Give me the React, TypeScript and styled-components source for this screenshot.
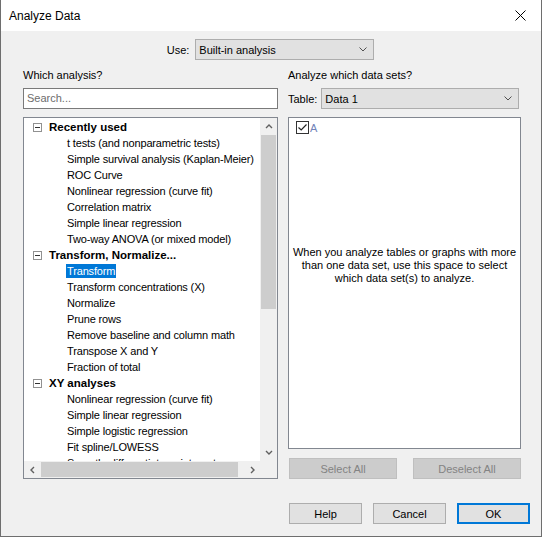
import styled, { createGlobalStyle } from 'styled-components';

const GlobalStyle = createGlobalStyle`
  html, body {
    margin: 0;
    padding: 0;
    background: #f0f0f0;
  }
  * {
    box-sizing: border-box;
  }
`;

interface TreeGroup {
  title: string;
  items: string[];
}

const groups: TreeGroup[] = [
  {
    title: 'Recently used',
    items: [
      't tests (and nonparametric tests)',
      'Simple survival analysis (Kaplan-Meier)',
      'ROC Curve',
      'Nonlinear regression (curve fit)',
      'Correlation matrix',
      'Simple linear regression',
      'Two-way ANOVA (or mixed model)',
    ],
  },
  {
    title: 'Transform, Normalize...',
    items: [
      'Transform',
      'Transform concentrations (X)',
      'Normalize',
      'Prune rows',
      'Remove baseline and column math',
      'Transpose X and Y',
      'Fraction of total',
    ],
  },
  {
    title: 'XY analyses',
    items: [
      'Nonlinear regression (curve fit)',
      'Simple linear regression',
      'Simple logistic regression',
      'Fit spline/LOWESS',
      'Smooth, differentiate or integrate curve',
    ],
  },
];

const selected = 'Transform';

function Chevron({ dir }: { dir: 'up' | 'down' | 'left' | 'right' }) {
  const paths = {
    down: 'M1 2 L4 5 L7 2',
    up: 'M1 5 L4 2 L7 5',
    left: 'M5 1 L2 4 L5 7',
    right: 'M3 1 L6 4 L3 7',
  };
  return (
    <svg width="8" height="8" viewBox="0 0 8 8">
      <path d={paths[dir]} fill="none" stroke="#606060" strokeWidth="1.4" />
    </svg>
  );
}

function DropArrow() {
  return (
    <svg width="8" height="5" viewBox="0 0 8 5">
      <path d="M0.5 0.5 L4 4 L7.5 0.5" fill="none" stroke="#505050" strokeWidth="1" />
    </svg>
  );
}

export default function App() {
  return (
    <>
      <GlobalStyle />
      <Window>
        <TitleBar>
          <span>Analyze Data</span>
          <CloseButton>
            <svg width="11" height="11" viewBox="0 0 11 11">
              <path d="M0.5 0.5 L10.5 10.5 M10.5 0.5 L0.5 10.5" stroke="#000" strokeWidth="1" />
            </svg>
          </CloseButton>
        </TitleBar>

        <Body>
          <UseRow>
            <span>Use:</span>
            <Select $width={179}>
              <span>Built-in analysis</span>
              <DropArrow />
            </Select>
          </UseRow>

          <Columns>
            <Column>
              <Label>Which analysis?</Label>
              <SearchBox>Search...</SearchBox>
              <TreeBox>
                <TreeView>
                  {groups.map((g) => (
                    <div key={g.title}>
                      <GroupRow>
                        <Toggle />
                        <span>{g.title}</span>
                      </GroupRow>
                      {g.items.map((item) => (
                        <ItemRow key={item}>
                          <ItemText $active={item === selected && g.title !== 'Recently used'}>
                            {item}
                          </ItemText>
                        </ItemRow>
                      ))}
                    </div>
                  ))}
                </TreeView>
                <VScroll>
                  <ArrowCell>
                    <Chevron dir="up" />
                  </ArrowCell>
                  <VThumb />
                  <Track />
                  <ArrowCell>
                    <Chevron dir="down" />
                  </ArrowCell>
                </VScroll>
                <HScroll>
                  <ArrowCell>
                    <Chevron dir="left" />
                  </ArrowCell>
                  <HThumb />
                  <Track />
                  <ArrowCell>
                    <Chevron dir="right" />
                  </ArrowCell>
                </HScroll>
                <Corner />
              </TreeBox>
            </Column>

            <Column>
              <Label>Analyze which data sets?</Label>
              <TableRow>
                <span>Table:</span>
                <Select $width={198}>
                  <span>Data 1</span>
                  <DropArrow />
                </Select>
              </TableRow>
              <DataSetBox>
                <DataSetRow>
                  <CheckBox>
                    <svg width="11" height="11" viewBox="0 0 11 11">
                      <path d="M1.5 5.5 L4.2 8 L9.5 2.5" fill="none" stroke="#222" strokeWidth="1.2" />
                    </svg>
                  </CheckBox>
                  <DataSetName>A</DataSetName>
                </DataSetRow>
                <Hint>
                  When you analyze tables or graphs with more
                  <br />
                  than one data set, use this space to select
                  <br />
                  which data set(s) to analyze.
                </Hint>
              </DataSetBox>
              <SelectRow>
                <Button $disabled>Select All</Button>
                <Button $disabled>Deselect All</Button>
              </SelectRow>
            </Column>
          </Columns>

          <Footer>
            <Button $w={73}>Help</Button>
            <Button $w={73}>Cancel</Button>
            <Button $w={73} $primary>
              OK
            </Button>
          </Footer>
        </Body>
      </Window>
    </>
  );
}

const font = `'Liberation Sans', Arial, sans-serif`;

const Window = styled.div`
  width: 542px;
  height: 537px;
  background: #f0f0f0;
  border: 1px solid #6e6e6e;
  border-top: none;
  display: flex;
  flex-direction: column;
  font-family: ${font};
  font-size: 11px;
  color: #000;
`;

const TitleBar = styled.div`
  height: 31px;
  background: #fff;
  display: flex;
  align-items: center;
  justify-content: space-between;
  padding-left: 8px;
  font-size: 12px;
`;

const CloseButton = styled.div`
  width: 46px;
  height: 31px;
  display: flex;
  align-items: center;
  justify-content: center;
  margin-right: -2px;
`;

const Body = styled.div`
  flex: 1;
  display: flex;
  flex-direction: column;
  padding: 8px 11px 0 22px;
`;

const UseRow = styled.div`
  display: flex;
  align-items: center;
  justify-content: center;
  gap: 6px;
  margin-right: 12px;
`;

const Select = styled.div<{ $width: number }>`
  width: ${(p) => p.$width}px;
  height: 21px;
  background: #e1e1e1;
  border: 1px solid #adadad;
  display: flex;
  align-items: center;
  justify-content: space-between;
  padding: 0 6px 0 3px;
`;

const Columns = styled.div`
  display: grid;
  grid-template-columns: 255px 233px;
  column-gap: 10px;
  margin-top: 8px;
`;

const Column = styled.div`
  display: flex;
  flex-direction: column;
`;

const Label = styled.div`
  height: 14px;
  line-height: 14px;
  margin-bottom: 6px;
`;

const SearchBox = styled.div`
  height: 21px;
  background: #fff;
  border: 1px solid #7a7a7a;
  color: #6d6d6d;
  padding-left: 3px;
  line-height: 19px;
`;

const TreeBox = styled.div`
  margin-top: 8px;
  height: 362px;
  border: 1px solid #828790;
  background: #fff;
  display: grid;
  grid-template-columns: 1fr 17px;
  grid-template-rows: 1fr 17px;
  overflow: hidden;
`;

const TreeView = styled.div`
  overflow: hidden;
  padding-top: 1px;
`;

const GroupRow = styled.div`
  height: 16px;
  display: flex;
  align-items: center;
  padding-left: 9px;
  gap: 7px;
  font-weight: bold;
  font-size: 11.5px;
`;

const Toggle = styled.span`
  width: 9px;
  height: 9px;
  border: 1px solid #919191;
  position: relative;
  &::after {
    content: '';
    position: absolute;
    left: 1px;
    right: 1px;
    top: 3px;
    height: 1px;
    background: #333;
  }
`;

const ItemRow = styled.div`
  height: 16px;
  display: flex;
  align-items: center;
  padding-left: 42px;
  white-space: nowrap;
  letter-spacing: -0.15px;
`;

const ItemText = styled.span<{ $active?: boolean }>`
  padding: 0 1px;
  line-height: 14px;
  background: ${(p) => (p.$active ? '#0078d7' : 'transparent')};
  color: ${(p) => (p.$active ? '#fff' : '#000')};
`;

const VScroll = styled.div`
  background: #f0f0f0;
  display: grid;
  grid-template-rows: 17px 174px 1fr 17px;
`;

const HScroll = styled.div`
  background: #f0f0f0;
  display: grid;
  grid-template-columns: 17px 197px 1fr 17px;
`;

const ArrowCell = styled.div`
  display: flex;
  align-items: center;
  justify-content: center;
`;

const VThumb = styled.div`
  background: #cdcdcd;
  margin: 0 1px;
`;

const HThumb = styled.div`
  background: #cdcdcd;
  margin: 1px 0;
`;

const Track = styled.div``;

const Corner = styled.div`
  background: #f0f0f0;
`;

const TableRow = styled.div`
  display: flex;
  align-items: center;
  gap: 4px;
`;

const DataSetBox = styled.div`
  margin-top: 8px;
  height: 332px;
  border: 1px solid #828790;
  background: #fff;
  display: flex;
  flex-direction: column;
`;

const DataSetRow = styled.div`
  display: flex;
  align-items: center;
  gap: 1px;
  padding: 3px 0 0 7px;
`;

const CheckBox = styled.span`
  width: 13px;
  height: 13px;
  border: 1px solid #333;
  background: #fff;
  display: flex;
  align-items: center;
  justify-content: center;
`;

const DataSetName = styled.span`
  color: #7283b8;
`;

const Hint = styled.div`
  margin-top: 112px;
  text-align: center;
  line-height: 13px;
`;

const SelectRow = styled.div`
  display: flex;
  justify-content: space-between;
  margin-top: 9px;
  padding-left: 1px;
`;

const Button = styled.div<{ $disabled?: boolean; $primary?: boolean; $w?: number }>`
  width: ${(p) => (p.$w ? `${p.$w}px` : '108px')};
  height: 21px;
  display: flex;
  align-items: center;
  justify-content: center;
  background: ${(p) => (p.$disabled ? '#cccccc' : '#e1e1e1')};
  border: ${(p) => (p.$primary ? '2px solid #0078d7' : p.$disabled ? '1px solid #bfbfbf' : '1px solid #adadad')};
  color: ${(p) => (p.$disabled ? '#838383' : '#000')};
`;

const Footer = styled.div`
  display: flex;
  justify-content: flex-end;
  gap: 11px;
  margin-top: 24px;
`;
